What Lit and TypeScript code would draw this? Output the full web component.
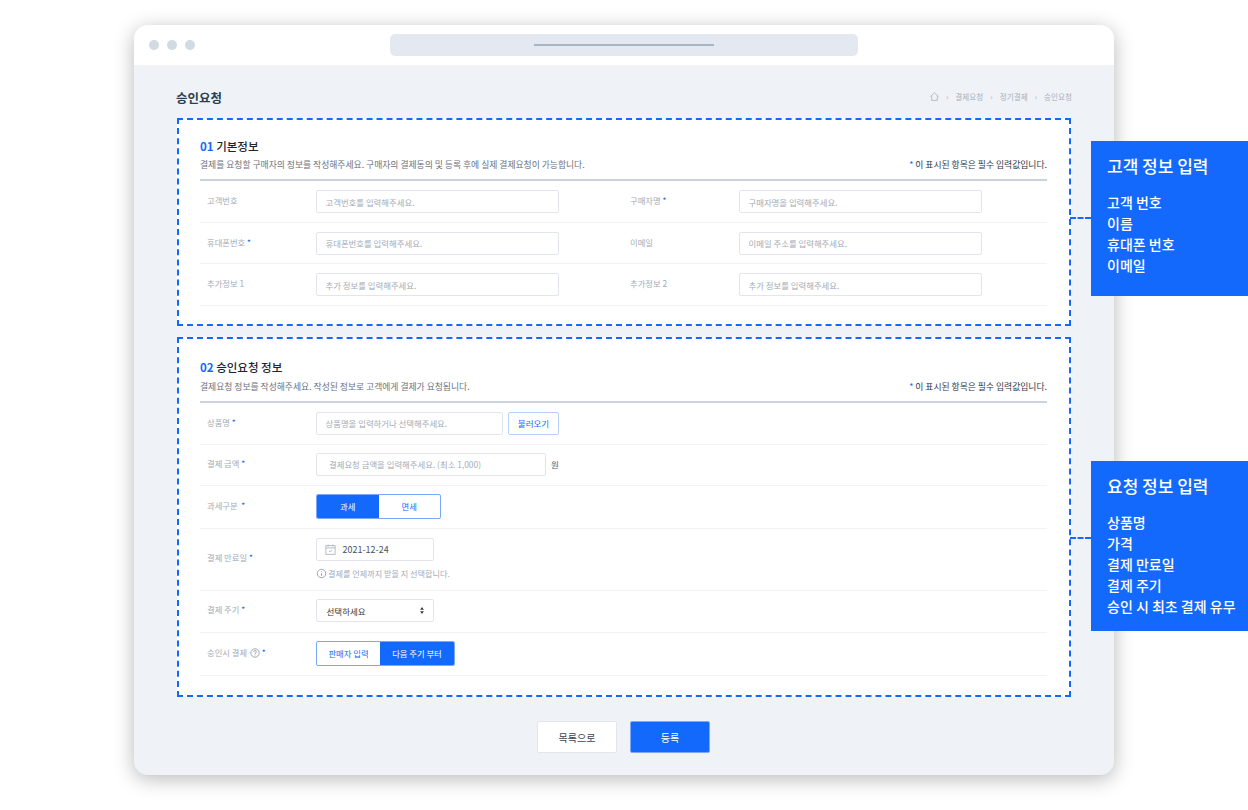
import { LitElement, html, css, svg } from "lit";
import { customElement } from "lit/decorators.js";

const home = html`<svg class="home" width="9" height="9" viewBox="0 0 9 9" fill="none" stroke="#a9b1bc" stroke-width=".8"><path d="M.5 4.5 4.5.8l4 3.7M1.7 3.6v4.8h5.6V3.6"/></svg>`;
const cal = html`<svg class="ic" width="11" height="11" viewBox="0 0 11 11" fill="none" stroke="#a5acb7" stroke-width=".8"><rect x=".9" y="1.7" width="9.2" height="8.6"/><path d="M.9 3.9h9.2M3.2.5v2M7.8.5v2M3.9 6.9l1.2 1.1 2-2"/></svg>`;
const info = html`<svg class="ic" width="11" height="11" viewBox="0 0 11 11" fill="none" stroke="#8d95a1" stroke-width=".8"><circle cx="5.5" cy="5.5" r="4.2"/><path d="M5.5 5v3M5.5 3v.9"/></svg>`;
const help = html`<svg class="qm" width="10" height="10" viewBox="0 0 11 11" fill="none" stroke="#8d95a1" stroke-width=".9"><circle cx="5.5" cy="5.5" r="4.6"/><path d="M4 4.3c0-2 3-2 3 0 0 1.2-1.5 1.1-1.5 2.3M5.5 7.4v.9"/></svg>`;
const updown = svg`<path d="M2 0 3.9 2.7H.1zM2 7 .1 4.3h3.8z" fill="#333a45"/>`;
const req = html`<span class="req">*</span>`;

@customElement("app-root")
export class AppRoot extends LitElement {
  static styles = css`
    :host { display: block; position: relative; width: 1248px; height: 810px; overflow: hidden; background: #fff;
      font-family: "Noto Sans CJK KR", "Noto Sans", sans-serif; box-sizing: border-box; padding: 25px 0 0 134px; color: #333a45; }
    * { box-sizing: border-box; }
    .win { width: 980px; height: 750px; border-radius: 14px; overflow: hidden; background: #eff3f8; box-shadow: 0 4px 20px rgba(0,0,0,.28); }
    .bar { height: 40px; background: #fff; display: flex; align-items: center; position: relative; padding-left: 15px; gap: 8px; }
    .dot { width: 10px; height: 10px; border-radius: 50%; background: #d2dae2; }
    .url { width: 468px; height: 22px; border-radius: 5px; background: #e4e9f1; margin-left: 187px; display: flex; align-items: center; justify-content: center; }
    .url i { display: block; width: 180px; height: 2px; background: #a9b5c2; }
    .main { padding: 0 43px 0 43px; }
    .top { height: 53px; display: flex; justify-content: space-between; align-items: center; padding: 13px 0 0 0; margin-right: -1px; margin-left: -1px; }
    .top h1 { margin: 0; font-size: 12.5px; font-weight: 700; color: #2c3e50; line-height: 16px; }
    .crumbs { display: flex; align-items: center; font-size: 7.6px; color: #a9b0bb; margin-bottom: 4px; }
    .crumbs b { font-weight: 400; margin: 0 7px; font-size: 8px; }
    .home { display: block; }
    .sec { width: 894px; background: #fff; border: 2px dashed #1469fd; padding: 0 22px 0 21px; }
    .s1 { height: 208px; }
    .s2 { height: 360px; margin-top: 11px; }
    .ttl { margin: 0; padding-top: 17px; font-size: 11.5px; font-weight: 500; line-height: 18px; color: #1f2530; }
    .s2 .ttl { padding-top: 19px; }
    .ttl span { color: #1469fd; font-weight: 700; }
    .sub { display: flex; justify-content: space-between; font-size: 8.8px; line-height: 14px; color: #6a7280; padding-top: 3px; height: 26px; border-bottom: 2px solid #cdd2e0; }
    .s2 .sub { padding-top: 4px; height: 27px; }
    .sub em { font-style: normal; color: #333a45; }
    .sub em span { color: #1469fd; }
    .row { display: flex; align-items: center; border-bottom: 1px solid #f1f3f6; height: 41px; }
    .s1 .row { height: 41.5px; padding-top: 1px; }
    .s2 .row { padding-bottom: 2px; }
    .s2 .sub + .row { height: 42px; padding-bottom: 1px; }
    .cell { display: flex; align-items: center; width: 423px; }
    .lab { width: 116px; padding-left: 7px; font-size: 8.3px; color: #a3abb6; line-height: 12px; flex: none; position: relative; top: -1.5px; white-space: pre; }
    .req { color: #1469fd; }
    .qm { vertical-align: -2px; margin-left: 1px; }
    .inp { height: 23px; border: 1px solid #e2e6ec; border-radius: 2px; background: #fff; font-size: 8.4px; color: #a3abb6; display: flex; align-items: center; padding-left: 8.5px; white-space: nowrap; }
    .w243 { width: 243px; }
    .load { margin-left: 5px; width: 51px; height: 23px; border: 1px solid #b9d0fb; border-radius: 2px; background: #fff; color: #1469fd; font-size: 8.5px; display: flex; align-items: center; justify-content: center; }
    .won { margin-left: 5px; font-size: 8.5px; color: #555c68; }
    .seg { display: flex; height: 25px; border: 1px solid #7aa8fb; border-radius: 2px; overflow: hidden; background: #fff; font-size: 8.3px; color: #1469fd; }
    .seg div { display: flex; align-items: center; justify-content: center; }
    .seg .on { background: #1469fd; color: #fff; }
    .date { width: 118px; color: #4a515d; gap: 6.5px; font-size: 9px; padding-left: 8px; }
    .ic { display: block; flex: none; }
    .hint { display: flex; align-items: center; gap: 1px; font-size: 8.15px; color: #a3abb6; margin-top: 6px; height: 13px; }
    .sel { width: 118px; color: #333a45; justify-content: space-between; padding-right: 9px; padding-left: 9.5px; font-size: 8.5px; }
    .foot { display: flex; justify-content: center; gap: 13px; padding-top: 24px; margin-left: -1px; }
    .btn { width: 80px; height: 32px; border-radius: 2px; font-size: 10px; display: flex; align-items: center; justify-content: center; }
    .ghost { background: #fff; border: 1px solid #e2e6ec; color: #3c434e; }
    .pri { background: #1469fd; border: 1px solid #7aa8fb; color: #fff; }
    .call { position: absolute; left: 1091px; width: 157px; background: #1469fd; color: #fff; padding: 12px 0 0 16px; }
    .call h2 { margin: 0 0 14px; font-size: 17px; line-height: 25px; font-weight: 500; }
    .call p { margin: 0; font-size: 14px; line-height: 21px; font-weight: 500; white-space: nowrap; }
    .c1 { top: 141px; height: 155px; }
    .c2 { top: 461px; height: 170px; }
    .link { position: absolute; left: 1070px; width: 21px; border-top: 2px dashed #1469fd; }
  `;

  row(cells: unknown, h?: number) {
    return html`<div class="row" style=${h ? `height:${h}px` : ""}>${cells}</div>`;
  }

  render() {
    return html`
      <div class="win">
        <div class="bar"><span class="dot"></span><span class="dot"></span><span class="dot"></span><div class="url"><i></i></div></div>
        <div class="main">
          <div class="top"><h1>승인요청</h1>
            <div class="crumbs">${home}<b>›</b>결제요청<b>›</b>정기결제<b>›</b>승인요청</div></div>
          <section class="sec s1">
            <h3 class="ttl"><span>01</span> 기본정보</h3>
            <div class="sub"><span>결제를 요청할 구매자의 정보를 작성해주세요. 구매자의 결제동의 및 등록 후에 실제 결제요청이 가능합니다.</span><em><span>*</span> 이 표시된 항목은 필수 입력값입니다.</em></div>
            ${this.row(html`<div class="cell"><div class="lab">고객번호</div><div class="inp w243">고객번호를 입력해주세요.</div></div><div class="cell"><div class="lab">구매자명 ${req}</div><div class="inp w243">구매자명을 입력해주세요.</div></div>`)}
            ${this.row(html`<div class="cell"><div class="lab">휴대폰번호 ${req}</div><div class="inp w243">휴대폰번호를 입력해주세요.</div></div><div class="cell"><div class="lab">이메일</div><div class="inp w243">이메일 주소를 입력해주세요.</div></div>`)}
            ${this.row(html`<div class="cell"><div class="lab">추가정보 1</div><div class="inp w243">추가 정보를 입력해주세요.</div></div><div class="cell"><div class="lab">추가정보 2</div><div class="inp w243">추가 정보를 입력해주세요.</div></div>`)}
          </section>
          <section class="sec s2">
            <h3 class="ttl"><span>02</span> 승인요청 정보</h3>
            <div class="sub"><span>결제요청 정보를 작성해주세요. 작성된 정보로 고객에게 결제가 요청됩니다.</span><em><span>*</span> 이 표시된 항목은 필수 입력값입니다.</em></div>
            ${this.row(html`<div class="lab">상품명 ${req}</div><div class="inp" style="width:187px">상품명을 입력하거나 선택해주세요.</div><div class="load">불러오기</div>`)}
            ${this.row(html`<div class="lab">결제 금액 ${req}</div><div class="inp" style="width:230px;padding-left:12px">결제요청 금액을 입력해주세요. (최소 1,000)</div><span class="won">원</span>`)}
            ${this.row(html`<div class="lab">과세구분  ${req}</div><div class="seg" style="width:125px"><div class="on" style="width:61.5px">과세</div><div style="flex:1">면세</div></div>`, 43)}
            <div class="row" style="height:62px">
              <div class="lab">결제 만료일 ${req}</div>
              <div><div class="inp date">${cal}2021-12-24</div><div class="hint">${info}결제를 언제까지 받을 지 선택합니다.</div></div>
            </div>
            ${this.row(html`<div class="lab">결제 주기 ${req}</div><div class="inp sel">선택하세요<svg width="4" height="7" viewBox="0 0 4 7">${updown}</svg></div>`, 42)}
            ${this.row(html`<div class="lab">승인시 결제 ${help} ${req}</div><div class="seg" style="width:139px"><div style="width:63px">판매자 입력</div><div class="on" style="flex:1">다음 주기 부터</div></div>`, 43)}
          </section>
          <div class="foot"><div class="btn ghost">목록으로</div><div class="btn pri">등록</div></div>
        </div>
      </div>
      <div class="link" style="top:217px"></div>
      <div class="link" style="top:537px"></div>
      <aside class="call c1"><h2>고객 정보 입력</h2><p>고객 번호</p><p>이름</p><p>휴대폰 번호</p><p>이메일</p></aside>
      <aside class="call c2"><h2>요청 정보 입력</h2><p>상품명</p><p>가격</p><p>결제 만료일</p><p>결제 주기</p><p>승인 시 최초 결제 유무</p></aside>
    `;
  }
}
